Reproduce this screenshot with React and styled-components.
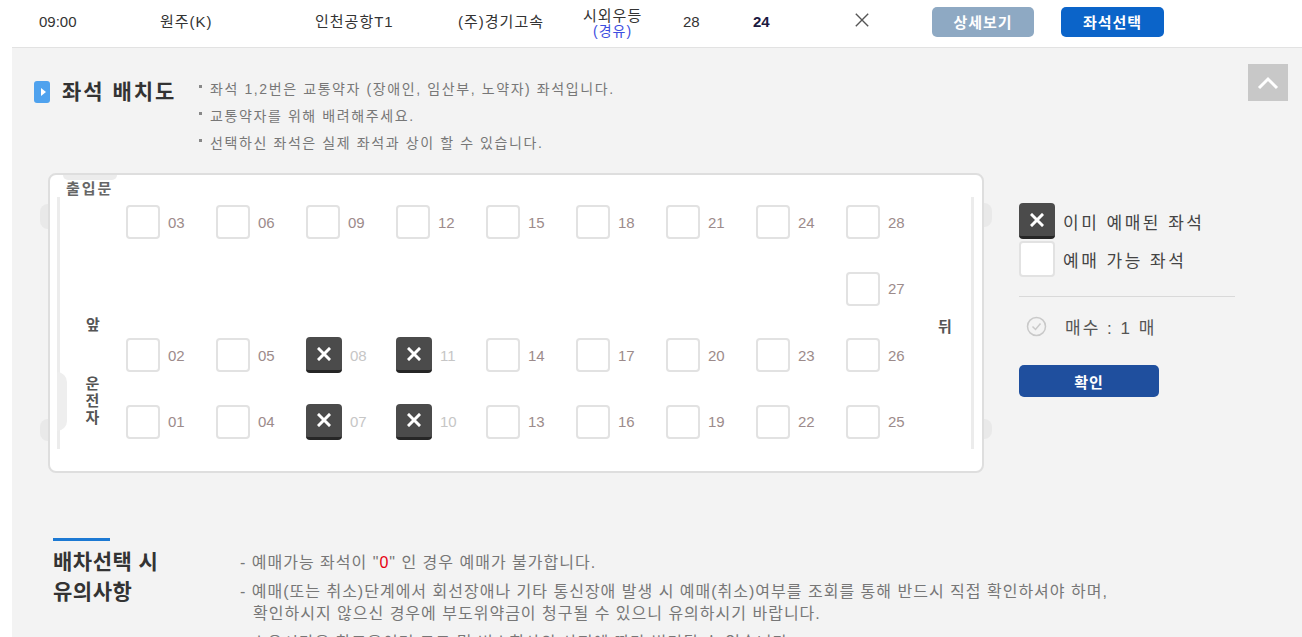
import React from 'react';
import styled, { createGlobalStyle, css } from 'styled-components';

const GlobalStyle = createGlobalStyle`
  body {
    margin: 0;
    background: #fff;
    font-family: "Liberation Sans", "Noto Sans CJK KR", sans-serif;
    color: #333;
  }
`;

const Page = styled.div`
  margin-left: 12px;
  height: 637px;
  overflow: hidden;
  display: flex;
  flex-direction: column;
`;

const TripRow = styled.div`
  display: grid;
  grid-template-columns: 121px 155px 143px 125px 100px 70px 101px 78px 129px 104px;
  align-items: center;
  height: 48px;
  flex-shrink: 0;
  box-sizing: border-box;
  padding: 0 0 4px 27px;
  border-bottom: 1px solid #e2e2e2;
  font-size: 15px;
  line-height: 18px;
  letter-spacing: 1px;
  color: #333;
  white-space: nowrap;
`;

const Time = styled.span`
  letter-spacing: 0;
`;

const Seats = styled.span`
  letter-spacing: 0;
  font-weight: ${p => (p.$strong ? 700 : 400)};
  color: ${p => (p.$strong ? '#1b1a3f' : '#333')};
`;

const Grade = styled.div`
  display: flex;
  flex-direction: column;
  margin-top: 2px;
  line-height: 16px;
`;

const Via = styled.span`
  margin-left: 10px;
  font-size: 14px;
  line-height: 14px;
  color: #3d4ee0;
`;

const RowButton = styled.button`
  width: ${p => (p.$primary ? 103 : 102)}px;
  height: 30px;
  border: 0;
  border-radius: 5px;
  background: ${p => (p.$primary ? '#0b64c9' : '#8ea9c3')};
  color: #fff;
  font-family: inherit;
  font-size: 15px;
  font-weight: 700;
  letter-spacing: 1px;
  padding: 0;
`;

const Board = styled.section`
  position: relative;
  flex: 1;
  background: #f3f3f3;
  padding: 28px 0 0 22px;
`;

const ScrollTop = styled.button`
  position: absolute;
  top: 16px;
  right: 14px;
  width: 40px;
  height: 37px;
  border: 0;
  padding: 0;
  background: #c8c8c8;
  display: flex;
  align-items: center;
  justify-content: center;
`;

const Header = styled.div`
  display: flex;
  align-items: flex-start;
`;

const Title = styled.h2`
  display: flex;
  align-items: center;
  gap: 12px;
  width: 164px;
  margin: 2px 0 0;
  font-size: 21px;
  line-height: 27px;
  font-weight: 700;
  letter-spacing: 2px;
  color: #333;
`;

const TitleMark = styled.span`
  width: 16px;
  height: 22px;
  border-radius: 3px;
  background: #4fa2ee;
  display: flex;
  align-items: center;
  justify-content: center;
  &::after {
    content: '';
    border-left: 5px solid #fff;
    border-top: 4px solid transparent;
    border-bottom: 4px solid transparent;
    margin-left: 2px;
  }
`;

const Notes = styled.ul`
  list-style: none;
  margin: 0;
  padding: 0;
  font-size: 14px;
  line-height: 27px;
  letter-spacing: 1.6px;
  color: #777;
`;

const NoteItem = styled.li`
  position: relative;
  padding-left: 12px;
  &::before {
    content: '';
    position: absolute;
    left: 1px;
    top: 9px;
    width: 3px;
    height: 3px;
    background: #888;
  }
`;

const SeatArea = styled.div`
  display: flex;
  align-items: flex-start;
  margin-top: 16px;
  padding-left: 14px;
`;

const Panel = styled.div`
  position: relative;
  width: 936px;
  height: 300px;
  box-sizing: border-box;
  padding: 6px 8px 0 7px;
  border: 2px solid #dedede;
  border-radius: 8px;
  background: #fff;
`;

const Wheel = styled.span`
  position: absolute;
  top: ${p => p.$top}px;
  ${p => (p.$right ? 'right: -10px;' : 'left: -10px;')}
  width: 8px;
  height: ${p => p.$height}px;
  background: #e9e9e9;
  border-radius: ${p => (p.$right ? '0 8px 8px 0' : '8px 0 0 8px')};
`;

const DoorTab = styled.span`
  position: absolute;
  top: 0;
  left: 13px;
  width: 54px;
  height: 5px;
  background: #ececec;
  border-radius: 0 0 10px 10px;
`;

const DoorLabel = styled.div`
  margin-left: 9px;
  height: 16px;
  font-size: 15px;
  line-height: 16px;
  font-weight: 700;
  letter-spacing: 2px;
  color: #666;
`;

const Cabin = styled.div`
  position: relative;
  display: flex;
  height: 252px;
  border-left: 3px solid #ececec;
  border-right: 3px solid #ececec;
  &::before {
    content: '';
    position: absolute;
    left: -3px;
    top: 175px;
    width: 10px;
    height: 59px;
    background: #eeeeee;
    border-radius: 0 10px 10px 0;
  }
`;

const SideLabels = styled.div`
  position: relative;
  width: 66px;
  display: flex;
  flex-direction: column;
  align-items: center;
  padding-top: 119px;
  box-sizing: border-box;
  font-size: 15px;
  font-weight: 700;
  color: #555;
  line-height: 18px;
`;

const DriverLabel = styled.span`
  margin-top: 41px;
  width: 15px;
  line-height: 17px;
  word-break: break-all;
`;

const RearLabel = styled.div`
  padding: 121px 0 0 2px;
  font-size: 15px;
  font-weight: 700;
  line-height: 18px;
  color: #555;
`;

const SeatGrid = styled.div`
  display: grid;
  grid-template-columns: repeat(9, 90px);
  grid-template-rows: repeat(4, 34px);
  row-gap: 32.5px;
  padding-top: 8px;
`;

const SeatCell = styled.div`
  grid-row: ${p => p.$row};
  grid-column: ${p => p.$col};
  display: flex;
  align-items: center;
  gap: 8px;
`;

const boxBase = css`
  box-sizing: border-box;
  border-radius: 4px;
  display: flex;
  align-items: center;
  justify-content: center;
  flex-shrink: 0;
`;

const SeatBox = styled.span`
  ${boxBase}
  width: ${p => p.$size}px;
  height: ${p => p.$size}px;
  ${p =>
    p.$booked
      ? css`
          background: #4b4b4b;
          border-bottom: 3px solid #262626;
        `
      : css`
          background: #fff;
          border: 2px solid #e2e2e2;
        `}
`;

const SeatNo = styled.span`
  font-size: 15px;
  color: ${p => (p.$booked ? '#c6c6c6' : '#9c8b8b')};
`;

const Legend = styled.div`
  margin-left: 35px;
  padding-top: 30px;
  width: 216px;
`;

const LegendItem = styled.div`
  display: flex;
  align-items: center;
  gap: 8px;
  margin-bottom: 2px;
  font-size: 17px;
  letter-spacing: 2.5px;
  color: #444;
`;

const Divider = styled.hr`
  margin: 19px 0 0;
  border: 0;
  border-top: 1px solid #d9d9d9;
`;

const CountRow = styled.div`
  display: flex;
  align-items: center;
  gap: 18px;
  margin-top: 19px;
  padding-left: 7px;
  height: 20px;
  font-size: 17px;
  letter-spacing: 2px;
  color: #555;
`;

const ConfirmButton = styled.button`
  margin-top: 29px;
  width: 140px;
  height: 32px;
  border: 0;
  border-radius: 5px;
  background: #1f4f9e;
  color: #fff;
  font-family: inherit;
  font-size: 15px;
  font-weight: 700;
  letter-spacing: 1px;
`;

const Notice = styled.div`
  display: flex;
  margin-top: 65px;
  padding-left: 19px;
`;

const NoticeHead = styled.div`
  width: 187px;
  flex-shrink: 0;
`;

const NoticeRule = styled.span`
  display: block;
  width: 57px;
  height: 3px;
  background: #1c79d3;
`;

const NoticeTitle = styled.h3`
  margin: 6px 0 0;
  font-size: 21px;
  line-height: 30px;
  font-weight: 700;
  letter-spacing: 0.5px;
  color: #333;
`;

const NoticeList = styled.ul`
  list-style: none;
  margin: 0;
  padding: 14px 0 0;
  font-size: 16px;
  line-height: 22px;
  letter-spacing: 1px;
  color: #777;
`;

const NoticeItem = styled.li`
  margin-bottom: 7px;
  padding-left: 13px;
  text-indent: -13px;
`;

const Zero = styled.b`
  font-weight: 400;
  color: #e60012;
`;

const XMark = ({ size = 14, color = '#fff', width = 3 }) => (
  <svg width={size} height={size} viewBox="0 0 14 14">
    <path d="M2 2L12 12M12 2L2 12" stroke={color} strokeWidth={width} strokeLinecap="square" />
  </svg>
);

const layout = [
  ['03', '06', '09', '12', '15', '18', '21', '24', '28'],
  [null, null, null, null, null, null, null, null, '27'],
  ['02', '05', '08', '11', '14', '17', '20', '23', '26'],
  ['01', '04', '07', '10', '13', '16', '19', '22', '25'],
];

const booked = ['07', '08', '10', '11'];

function Seat({ no, row, col }) {
  const isBooked = booked.includes(no);
  return (
    <SeatCell $row={row} $col={col}>
      <SeatBox $booked={isBooked} $size={isBooked ? 36 : 34}>
        {isBooked && <XMark />}
      </SeatBox>
      <SeatNo $booked={isBooked}>{no}</SeatNo>
    </SeatCell>
  );
}

function App() {
  return (
    <>
      <GlobalStyle />
      <Page>
        <TripRow>
          <Time>09:00</Time>
          <span>원주(K)</span>
          <span>인천공항T1</span>
          <span>(주)경기고속</span>
          <Grade>
            <span>시외우등</span>
            <Via>(경유)</Via>
          </Grade>
          <Seats>28</Seats>
          <Seats $strong>24</Seats>
          <span>
            <XMark size={16} color="#555" width={1.2} />
          </span>
          <span>
            <RowButton>상세보기</RowButton>
          </span>
          <span>
            <RowButton $primary>좌석선택</RowButton>
          </span>
        </TripRow>

        <Board>
          <ScrollTop aria-label="맨 위로">
            <svg width="22" height="14" viewBox="0 0 22 14">
              <path d="M2 12L11 3L20 12" fill="none" stroke="#fff" strokeWidth="3" />
            </svg>
          </ScrollTop>

          <Header>
            <Title>
              <TitleMark />
              좌석 배치도
            </Title>
            <Notes>
              <NoteItem>좌석 1,2번은 교통약자 (장애인, 임산부, 노약자) 좌석입니다.</NoteItem>
              <NoteItem>교통약자를 위해 배려해주세요.</NoteItem>
              <NoteItem>선택하신 좌석은 실제 좌석과 상이 할 수 있습니다.</NoteItem>
            </Notes>
          </Header>

          <SeatArea>
            <Panel>
              <DoorTab />
              <Wheel $top={29} $height={25} />
              <Wheel $top={244} $height={22} />
              <Wheel $right $top={28} $height={24} />
              <Wheel $right $top={244} $height={20} />
              <DoorLabel>출입문</DoorLabel>
              <Cabin>
                <SideLabels>
                  <span>앞</span>
                  <DriverLabel>운전자</DriverLabel>
                </SideLabels>
                <SeatGrid>
                  {layout.map((seats, r) =>
                    seats.map((no, c) =>
                      no ? <Seat key={no} no={no} row={r + 1} col={c + 1} /> : null
                    )
                  )}
                </SeatGrid>
                <RearLabel>뒤</RearLabel>
              </Cabin>
            </Panel>

            <Legend>
              <LegendItem>
                <SeatBox $booked $size={36}>
                  <XMark />
                </SeatBox>
                이미 예매된 좌석
              </LegendItem>
              <LegendItem>
                <SeatBox $size={36} />
                예매 가능 좌석
              </LegendItem>
              <Divider />
              <CountRow>
                <svg width="21" height="21" viewBox="0 0 21 21">
                  <circle cx="10.5" cy="10.5" r="9" fill="none" stroke="#c9c9c9" strokeWidth="1.5" />
                  <path d="M6.5 10.5L9.5 13.5L14.5 7.5" fill="none" stroke="#c9c9c9" strokeWidth="1.5" />
                </svg>
                매수 : 1 매
              </CountRow>
              <ConfirmButton>확인</ConfirmButton>
            </Legend>
          </SeatArea>

          <Notice>
            <NoticeHead>
              <NoticeRule />
              <NoticeTitle>
                배차선택 시
                <br />
                유의사항
              </NoticeTitle>
            </NoticeHead>
            <NoticeList>
              <NoticeItem>
                - 예매가능 좌석이 "<Zero>0</Zero>" 인 경우 예매가 불가합니다.
              </NoticeItem>
              <NoticeItem>
                - 예매(또는 취소)단계에서 회선장애나 기타 통신장애 발생 시 예매(취소)여부를 조회를 통해 반드시 직접 확인하셔야 하며,
                <br />
                확인하시지 않으신 경우에 부도위약금이 청구될 수 있으니 유의하시기 바랍니다.
              </NoticeItem>
              <NoticeItem>- 소요시간은 참고용이며 도로 및 버스회사의 사정에 따라 변경될 수 있습니다.</NoticeItem>
            </NoticeList>
          </Notice>
        </Board>
      </Page>
    </>
  );
}

export default App;
